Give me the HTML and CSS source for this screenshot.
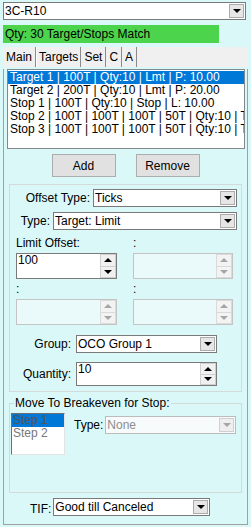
FILE: index.html
```html
<!DOCTYPE html>
<html lang="en">
<head>
    <meta charset="UTF-8">
    <meta name="viewport" content="width=device-width, initial-scale=1.0">
    <title>Bracket Targets</title>
    <link rel="stylesheet" href="styles.css">
</head>
<body>
    <div class="combo top-combo">
        <span class="value">3C-R10</span>
        <span class="drop"><i class="tri-down"></i></span>
    </div>

    <div class="status">Qty: 30 Target/Stops Match</div>

    <div class="tabs">
        <span class="tab">Main</span>
        <span class="tab active">Targets</span>
        <span class="tab">Set</span>
        <span class="tab">C</span>
        <span class="tab">A</span>
    </div>

    <div class="page">
        <ul class="listbox">
            <li class="selected">Target 1 | 100T | Qty:10 | Lmt | P: 10.00</li>
            <li>Target 2 | 200T | Qty:10 | Lmt | P: 20.00</li>
            <li>Stop 1 | 100T | Qty:10 | Stop | L: 10.00</li>
            <li>Stop 2 | 100T | 100T | 100T | 50T | Qty:10 | Trail</li>
            <li>Stop 3 | 100T | 100T | 100T | 50T | Qty:10 | Trail</li>
        </ul>

        <div class="buttons">
            <button>Add</button>
            <button>Remove</button>
        </div>

        <div class="group">
            <div class="row-right">
                <label>Offset Type:</label>
                <div class="combo offset-combo">
                    <span class="value">Ticks</span>
                    <span class="drop"><i class="tri-down"></i></span>
                </div>
            </div>
            <div class="row-right">
                <label>Type:</label>
                <div class="combo type-combo">
                    <span class="value">Target: Limit</span>
                    <span class="drop"><i class="tri-down"></i></span>
                </div>
            </div>

            <div class="spin-grid">
                <div class="field">
                    <label>Limit Offset:</label>
                    <div class="spin">
                        <span class="value">100</span>
                        <span class="arrows"><span><i class="tri-up"></i></span><span><i class="tri-down"></i></span></span>
                    </div>
                </div>
                <div class="field">
                    <label>:</label>
                    <div class="spin disabled">
                        <span class="value"></span>
                        <span class="arrows"><span><i class="tri-up"></i></span><span><i class="tri-down"></i></span></span>
                    </div>
                </div>
                <div class="field">
                    <label>:</label>
                    <div class="spin disabled">
                        <span class="value"></span>
                        <span class="arrows"><span><i class="tri-up"></i></span><span><i class="tri-down"></i></span></span>
                    </div>
                </div>
                <div class="field">
                    <label>:</label>
                    <div class="spin disabled">
                        <span class="value"></span>
                        <span class="arrows"><span><i class="tri-up"></i></span><span><i class="tri-down"></i></span></span>
                    </div>
                </div>
            </div>

            <div class="form-row group-row">
                <label>Group:</label>
                <div class="combo">
                    <span class="value">OCO Group 1</span>
                    <span class="drop"><i class="tri-down"></i></span>
                </div>
            </div>
            <div class="form-row qty-row">
                <label>Quantity:</label>
                <div class="spin qty-spin">
                    <span class="value">10</span>
                    <span class="arrows"><span><i class="tri-up"></i></span><span><i class="tri-down"></i></span></span>
                </div>
            </div>
        </div>

        <fieldset class="breakeven">
            <legend>Move To Breakeven for Stop:</legend>
            <div class="be-body">
                <ul class="steps">
                    <li class="selected">Step 1</li>
                    <li>Step 2</li>
                </ul>
                <div class="be-type">
                    <label>Type:</label>
                    <div class="combo disabled">
                        <span class="value">None</span>
                        <span class="drop"><i class="tri-down"></i></span>
                    </div>
                </div>
            </div>
        </fieldset>

        <div class="tif-row">
            <label>TIF:</label>
            <div class="combo tif-combo">
                <span class="value">Good till Canceled</span>
                <span class="drop"><i class="tri-down"></i></span>
            </div>
        </div>
    </div>
</body>
</html>
```

FILE: styles.css
```css
body {
    margin: 0;
    width: 251px;
    background-color: #dbf8f8;
    font-family: "Liberation Sans", Arial, sans-serif;
    font-size: 12px;
    color: #000;
}

ul {
    list-style: none;
    margin: 0;
    padding: 0;
}

label {
    line-height: 14px;
    white-space: nowrap;
}

/* combo boxes */
.combo {
    display: flex;
    box-sizing: border-box;
    height: 18px;
    border: 1px solid #7a7a7a;
    background-color: #fff;
}

.combo .value {
    flex: 1;
    padding-left: 1px;
    line-height: 16px;
    white-space: nowrap;
    overflow: hidden;
}

.combo .drop {
    width: 13px;
    margin: 1px;
    border: 1px solid #acacac;
    background-color: #e6e6e6;
    display: flex;
    align-items: center;
    justify-content: center;
}

.combo.disabled {
    border-color: #bcbcbc;
    background-color: #f7fbfb;
    color: #8d8d8d;
}

.combo.disabled .drop {
    border-color: #d0d0d0;
    background-color: #eeeeee;
}

.tri-down,
.tri-up {
    display: block;
    width: 0;
    height: 0;
    border-left: 4px solid transparent;
    border-right: 4px solid transparent;
}

.tri-down {
    border-top: 4px solid #000;
}

.tri-up {
    border-bottom: 4px solid #000;
}

.disabled .tri-down {
    border-top-color: #a6a6a6;
}

.disabled .tri-up {
    border-bottom-color: #a6a6a6;
}

.top-combo {
    margin: 2px 5px 0 3px;
}

.status {
    margin: 5px 0 0 3px;
    width: 216px;
    height: 18px;
    padding-left: 2px;
    box-sizing: border-box;
    line-height: 18px;
    background-color: #4cd44c;
}

/* tabs */
.tabs {
    display: flex;
    margin: 4px 3px 0 3px;
    height: 20px;
    background-color: #f0f0f0;
}

.tab {
    padding: 0 3px;
    line-height: 21px;
    border-right: 1px solid #8a8a8a;
}

.tab.active {
    border-left: 1px solid #fff;
    padding: 0 2px 0 2px;
}

.page {
    margin: 0 3px;
    border: 1px solid #a0a0a0;
    border-top: none;
    padding-bottom: 8px;
}

.listbox {
    margin: 2px 2px 0 3px;
    height: 80px;
    box-sizing: border-box;
    padding: 1px 0;
    border: 1px solid #828790;
    background-color: #fff;
    overflow: hidden;
}

.listbox li {
    height: 13px;
    line-height: 13px;
    padding-left: 2px;
    white-space: nowrap;
}

.listbox li.selected {
    background-color: #0078d7;
    color: #fff;
}

.buttons {
    display: flex;
    justify-content: center;
    gap: 20px;
    margin-top: 5px;
}

.buttons button {
    width: 64px;
    height: 23px;
    padding: 0;
    font: inherit;
    color: #000;
    background-color: #e1e1e1;
    border: 1px solid #adadad;
}

/* offset group */
.group {
    margin: 7px 5px 0 5px;
    padding: 4px 4px 5px 6px;
    border: 1px solid #d3dada;
}

.row-right {
    display: flex;
    justify-content: flex-end;
    align-items: center;
    gap: 3px;
}

.row-right + .row-right {
    margin-top: 5px;
}

.offset-combo {
    width: 144px;
}

.type-combo {
    width: 184px;
}

.spin-grid {
    display: grid;
    grid-template-columns: 101px 100px;
    column-gap: 16px;
    row-gap: 3px;
    margin-top: 6px;
}

.field label {
    display: block;
    margin-bottom: 3px;
}

.spin {
    display: flex;
    box-sizing: border-box;
    height: 26px;
    border: 1px solid #7a7a7a;
    background-color: #fff;
}

.spin .value {
    flex: 1;
    padding-left: 1px;
    line-height: 13px;
}

.spin .arrows {
    width: 16px;
    display: flex;
    flex-direction: column;
}

.spin .arrows span {
    flex: 1;
    display: flex;
    align-items: center;
    justify-content: center;
    background-color: #f0f0f0;
    border: 1px solid #cfcfcf;
}

.spin .arrows span + span {
    border-top: none;
}

.spin.disabled {
    border-color: #c4c4c4;
    background-color: #eaf9f9;
}

.spin.disabled .arrows span {
    background-color: #f3f3f3;
    border-color: #dadada;
}

.form-row {
    display: grid;
    grid-template-columns: 57px 141px;
    column-gap: 3px;
    align-items: center;
}

.form-row label {
    text-align: right;
    padding-right: 2px;
}

.group-row {
    margin-top: 10px;
}

.qty-row {
    margin-top: 9px;
}

.qty-spin {
    height: 24px;
}

/* breakeven */
.breakeven {
    margin: 4px 5px 0 5px;
    padding: 0 0 0 1px;
    border: 1px solid #d3dada;
    min-width: 0;
}

.breakeven legend {
    margin-left: 3px;
    padding: 0 1px;
    line-height: 14px;
}

.be-body {
    display: flex;
    align-items: flex-start;
    height: 82px;
    box-sizing: border-box;
    padding-top: 3px;
}

.steps {
    width: 54px;
    height: 42px;
    box-sizing: border-box;
    border: 1px solid #e3e3e3;
    border-left-color: #6e6e6e;
    border-top-color: #6e6e6e;
    background-color: #fff;
    color: #777;
}

.steps li {
    height: 13px;
    line-height: 13px;
    padding-left: 1px;
}

.steps li.selected {
    background-color: #0078d7;
    color: #555;
}

.be-type {
    display: flex;
    align-items: center;
    gap: 2px;
    margin: 3px 0 0 9px;
}

.be-type .combo {
    width: 131px;
}

/* tif */
.tif-row {
    display: flex;
    align-items: flex-end;
    gap: 2px;
    margin: 5px 0 0 26px;
}

.tif-combo {
    width: 157px;
}
```
